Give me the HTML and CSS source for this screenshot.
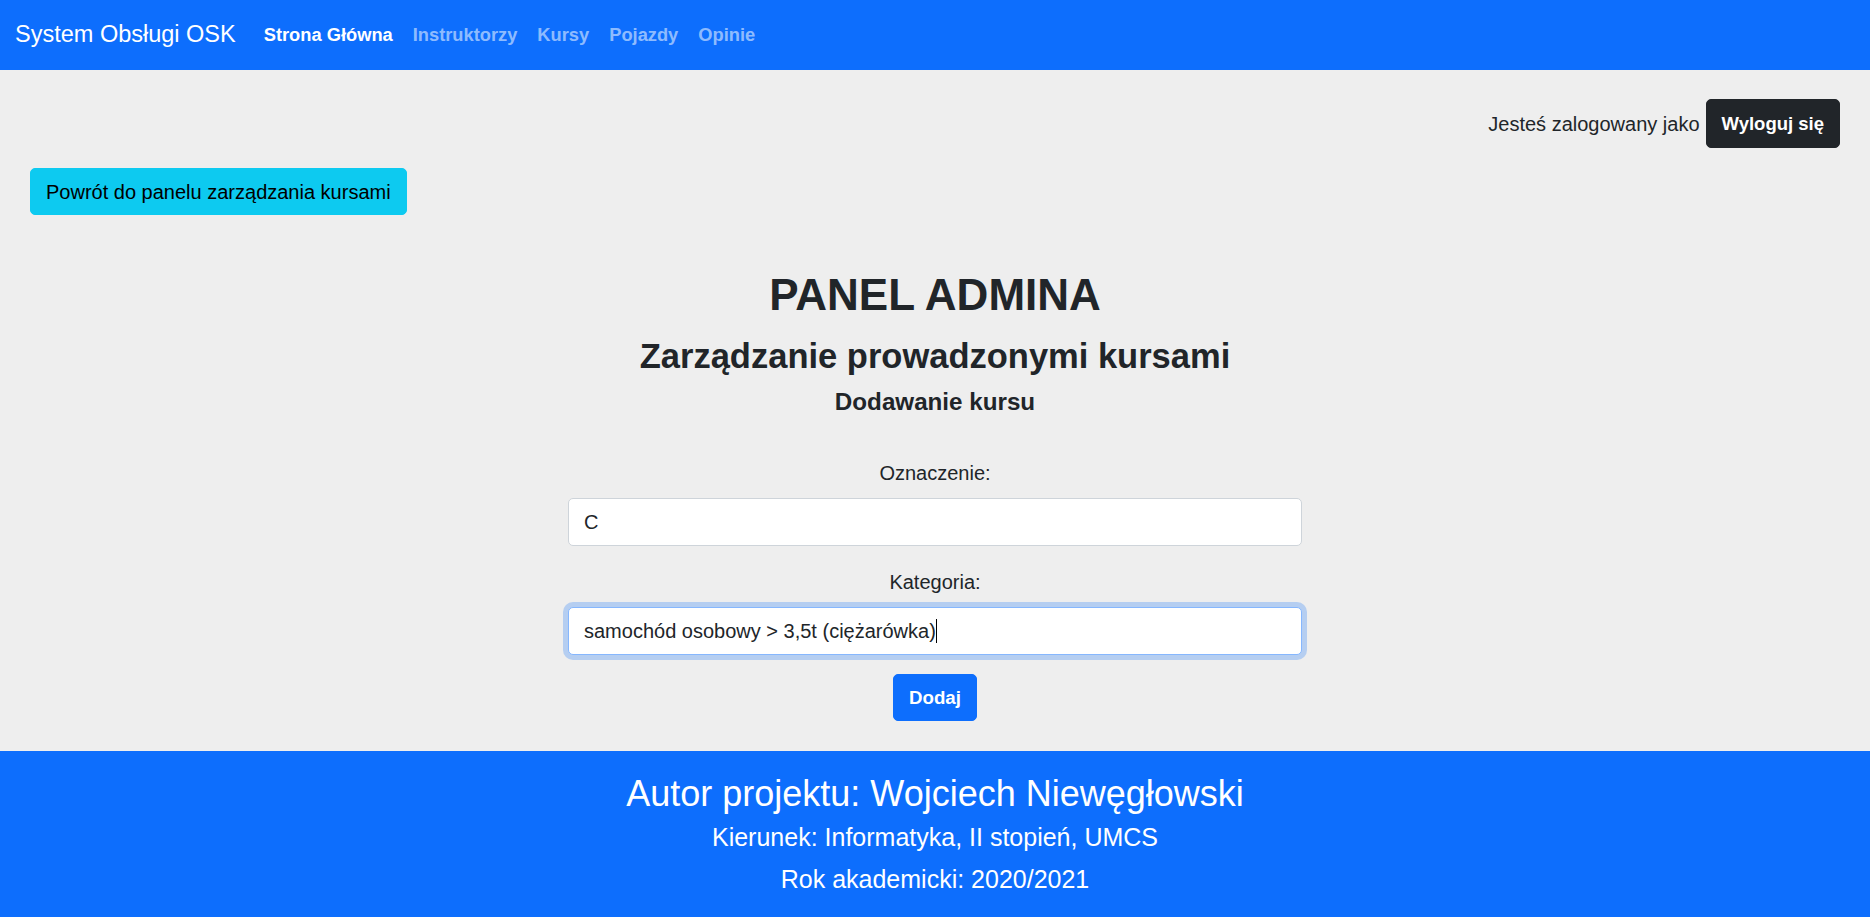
FILE: index.html
```html
<!DOCTYPE html>
<html lang="pl">
<head>
<meta charset="utf-8">
<title>System Obsługi OSK</title>
<link rel="stylesheet" href="styles.css">
</head>
<body>
<nav class="navbar">
  <a class="brand" href="#">System Obsługi OSK</a>
  <ul class="nav-links">
    <li><a class="nav-link active" href="#">Strona Główna</a></li>
    <li><a class="nav-link" href="#">Instruktorzy</a></li>
    <li><a class="nav-link" href="#">Kursy</a></li>
    <li><a class="nav-link" href="#">Pojazdy</a></li>
    <li><a class="nav-link" href="#">Opinie</a></li>
  </ul>
</nav>
<main class="content">
  <div class="userbar">
    <span class="user-text">Jesteś zalogowany jako</span>
    <button class="btn btn-dark" type="button">Wyloguj się</button>
  </div>
  <div class="back-row">
    <button class="btn btn-info" type="button">Powrót do panelu zarządzania kursami</button>
  </div>
  <section class="panel">
    <h1 class="title">PANEL ADMINA</h1>
    <h2 class="subtitle">Zarządzanie prowadzonymi kursami</h2>
    <h4 class="section-title">Dodawanie kursu</h4>
    <form class="course-form">
      <div class="form-group">
        <label class="form-label" for="oznaczenie">Oznaczenie:</label>
        <input class="form-control" id="oznaczenie" type="text" value="C">
      </div>
      <div class="form-group">
        <label class="form-label" for="kategoria">Kategoria:</label>
        <div class="form-control focused" id="kategoria">samochód osobowy &gt; 3,5t (ciężarówka)<span class="caret"></span></div>
      </div>
      <button class="btn btn-primary" type="button">Dodaj</button>
    </form>
  </section>
</main>
<footer class="footer">
  <p class="footer-author">Autor projektu: Wojciech Niewęgłowski</p>
  <p class="footer-line">Kierunek: Informatyka, II stopień, UMCS</p>
  <p class="footer-line">Rok akademicki: 2020/2021</p>
</footer>
</body>
</html>
```
FILE: styles.css
```css
* {
  box-sizing: border-box;
}

body {
  margin: 0;
  font-family: "Liberation Sans", Arial, sans-serif;
  font-size: 20px;
  line-height: 1.5;
  color: #212529;
  background: #eeeeee;
}

.navbar {
  display: flex;
  align-items: center;
  height: 70px;
  padding: 0 15px;
  background: #0d6efd;
}

.brand {
  font-size: 23.5px;
  color: #ffffff;
  text-decoration: none;
  margin-right: 18px;
  white-space: nowrap;
}

.nav-links {
  display: flex;
  list-style: none;
  margin: 0;
  padding: 0;
}

.nav-link {
  display: block;
  padding: 0 10px;
  font-size: 18.3px;
  font-weight: 700;
  color: rgba(255, 255, 255, 0.55);
  text-decoration: none;
}

.nav-link.active {
  color: #ffffff;
}

.content {
  padding: 29px 30px 30px;
  background: #eeeeee;
}

.userbar {
  display: flex;
  justify-content: flex-end;
  align-items: center;
  gap: 6px;
}

.btn {
  display: inline-block;
  font-family: inherit;
  font-size: 20px;
  line-height: 30px;
  padding: 7.5px 15px;
  border: 1px solid transparent;
  border-radius: 5px;
  cursor: pointer;
}

.btn-dark {
  background: #212529;
  border-color: #212529;
  color: #ffffff;
  font-weight: 700;
  font-size: 18.5px;
  padding-top: 8.5px;
  padding-bottom: 8.5px;
}

.btn-info {
  background: #0dcaf0;
  border-color: #0dcaf0;
  color: #000000;
}

.btn-primary {
  background: #0d6efd;
  border-color: #0d6efd;
  color: #ffffff;
  font-weight: 700;
  font-size: 18.7px;
}

.back-row {
  margin-top: 20px;
}

.panel {
  display: flex;
  flex-direction: column;
  align-items: center;
  margin-top: 50px;
}

.title {
  margin: 0;
  font-size: 44px;
  font-weight: 700;
  line-height: 60px;
}

.subtitle {
  margin: 7px 0 0;
  font-size: 34.5px;
  font-weight: 700;
  line-height: 48px;
}

.section-title {
  margin: 4px 0 0;
  font-size: 24.2px;
  font-weight: 700;
  line-height: 36px;
}

.course-form {
  display: flex;
  flex-direction: column;
  align-items: center;
  margin-top: 38px;
}

.form-group {
  display: flex;
  flex-direction: column;
  align-items: center;
  width: 734px;
}

.form-group + .form-group {
  margin-top: 21px;
}

.form-label {
  line-height: 30px;
  margin-bottom: 10px;
}

.form-control {
  display: block;
  width: 100%;
  height: 48px;
  padding: 8px 15px;
  font-family: inherit;
  font-size: 20px;
  line-height: 30px;
  color: #212529;
  background: #ffffff;
  border: 1px solid #ced4da;
  border-radius: 5px;
  text-align: left;
}

.form-control.focused {
  border-color: #86b7fe;
  box-shadow: 0 0 0 5px rgba(13, 110, 253, 0.25);
}

.caret {
  display: inline-block;
  width: 1px;
  height: 24px;
  background: #000000;
  vertical-align: -5px;
}

.course-form .btn-primary {
  margin-top: 19px;
}

.footer {
  background: #0d6efd;
  color: #ffffff;
  text-align: center;
  padding: 21px 0 20px;
}

.footer p {
  margin: 0;
}

.footer-author {
  font-size: 36px;
  line-height: 43px;
}

.footer .footer-line {
  font-size: 25px;
  line-height: 37.5px;
  margin-top: 4px;
}
```
